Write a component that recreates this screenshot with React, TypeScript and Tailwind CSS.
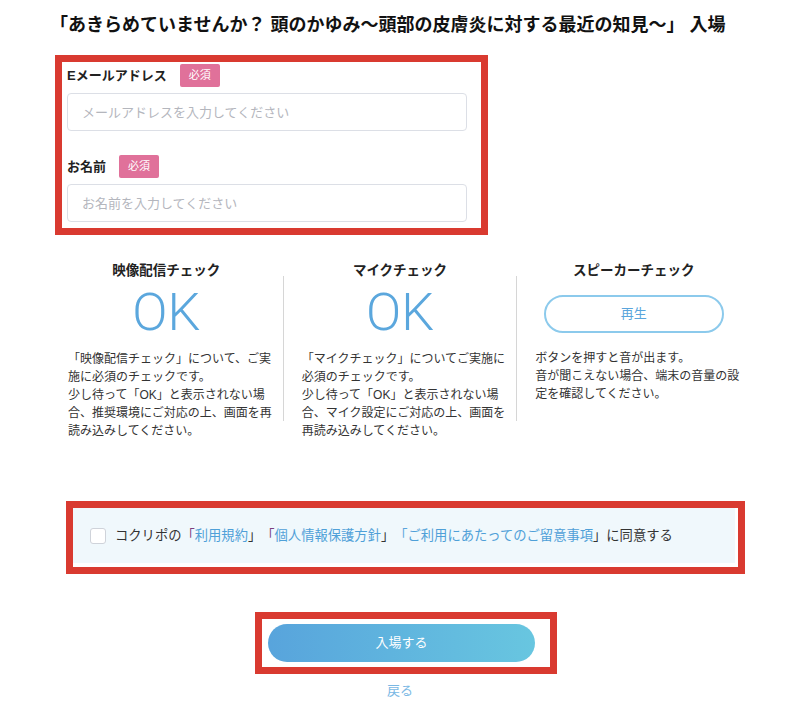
import React from 'react';

const Required: React.FC = () => (
  <span className="flex h-[23px] w-[40px] items-center justify-center rounded-[2px] bg-[#e0719a] text-[11px] text-white">
    必須
  </span>
);

const CheckColumn: React.FC<{ title: string; children: React.ReactNode }> = ({ title, children }) => (
  <div className="flex w-[233px] flex-col">
    <div className="h-[20px] text-center text-[13.5px] font-bold leading-[20px] text-[#222]">{title}</div>
    {children}
  </div>
);

const Ok: React.FC = () => (
  <div className="mt-[6px] text-center font-['Roboto',sans-serif] text-[52px] font-light leading-[52px] text-[#5ba7dd]">
    OK
  </div>
);

const Desc: React.FC<{ className?: string; children: React.ReactNode }> = ({ className = '', children }) => (
  <p className={`w-[208px] pl-[18px] box-content text-[12px] leading-[18px] text-[#333] ${className}`}>{children}</p>
);

export default function App() {
  return (
    <div className="min-h-[715px] bg-white font-['Liberation_Sans','Noto_Sans_CJK_JP',sans-serif] [text-spacing-trim:space-all]">
      <div className="mx-auto w-[700px] pt-[13px]">
        <h1 className="text-[18px] font-bold leading-[24px] text-[#111]">
          「あきらめていませんか？ 頭のかゆみ〜頭部の皮膚炎に対する最近の知見〜」 入場
        </h1>

        {/* form */}
        <div className="ml-[5px] mt-[18px] w-[433px] border-[7px] border-[#d93a30] pb-[6px] pl-[5px] pt-[2px]">
          <div className="flex h-[23px] items-center gap-[13px]">
            <span className="text-[13px] font-bold text-[#222]">Eメールアドレス</span>
            <Required />
          </div>
          <input
            type="text"
            placeholder="メールアドレスを入力してください"
            className="mt-[6px] h-[38px] w-[400px] rounded-[4px] border border-[#dcdfe6] bg-white px-[14px] text-[13px] placeholder:text-[#b4b6bd] focus:outline-none"
          />
          <div className="mt-[24px] flex h-[23px] items-center gap-[13px]">
            <span className="text-[13px] font-bold text-[#222]">お名前</span>
            <Required />
          </div>
          <input
            type="text"
            placeholder="お名前を入力してください"
            className="mt-[6px] h-[38px] w-[400px] rounded-[4px] border border-[#dcdfe6] bg-white px-[14px] text-[13px] placeholder:text-[#b4b6bd] focus:outline-none"
          />
        </div>

        {/* checks */}
        <div className="mt-[26px] flex">
          <CheckColumn title="映像配信チェック">
            <Ok />
            <Desc className="mt-[11px]">
              「映像配信チェック」について、ご実施に必須のチェックです。
              <br />
              少し待って「OK」と表示されない場合、推奨環境にご対応の上、画面を再読み込みしてください。
            </Desc>
          </CheckColumn>
          <div className="mt-[15px] h-[145px] w-px bg-[#d6d6d6]" />
          <CheckColumn title="マイクチェック">
            <Ok />
            <Desc className="mt-[11px]">
              「マイクチェック」についてご実施に必須のチェックです。
              <br />
              少し待って「OK」と表示されない場合、マイク設定にご対応の上、画面を再読み込みしてください。
            </Desc>
          </CheckColumn>
          <div className="mt-[15px] h-[145px] w-px bg-[#d6d6d6]" />
          <CheckColumn title="スピーカーチェック">
            <button
              type="button"
              className="mx-auto mt-[14px] h-[38px] w-[180px] rounded-full border-2 border-[#8ccaec] text-[13px] text-[#5aa5dc]"
            >
              再生
            </button>
            <Desc className="mt-[16px]">
              ボタンを押すと音が出ます。
              <br />
              音が聞こえない場合、端末の音量の設定を確認してください。
            </Desc>
          </CheckColumn>
        </div>

        {/* agreement */}
        <div className="ml-[16px] mt-[61px] w-[679px] border-[7px] border-[#d93a30] bg-white pb-[4px] pr-[3px]">
          <div className="flex h-[55px] items-center bg-[#f0f8fc] pl-[17px]">
            <span className="h-[16px] w-[16px] rounded-[3px] border border-[#cfd3da] bg-white" />
            <span className="ml-[9px] text-[13.3px] text-[#333]">
              コクリポの<span className="text-[#7b3f7f]">「</span>
              <span className="text-[#4fa0d8]">利用規約</span>」<span className="text-[#7b3f7f]">「</span>
              <span className="text-[#4fa0d8]">個人情報保護方針</span>」<span className="text-[#5aa5dc]">「</span>
              <span className="text-[#4fa0d8]">ご利用にあたってのご留意事項</span>」に同意する
            </span>
          </div>
        </div>

        {/* submit */}
        <div className="ml-[205px] mt-[38px] w-[302px] border-[7px] border-[#d93a30] bg-white py-[5px] pl-[6px]">
          <button
            type="button"
            className="h-[38px] w-[267px] rounded-full bg-gradient-to-r from-[#58a4dc] to-[#68c6e0] text-[13px] text-white"
          >
            入場する
          </button>
        </div>
        <div className="mt-[8px] text-center text-[13px] leading-[18px] text-[#7ab8e4]">戻る</div>
      </div>
    </div>
  );
}
